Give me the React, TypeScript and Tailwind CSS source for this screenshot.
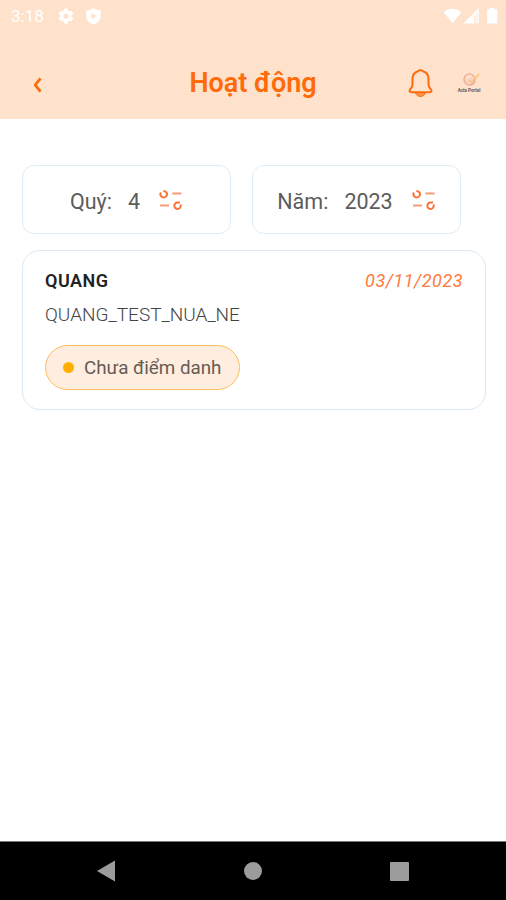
import type { ReactNode } from 'react'

function StatusBar() {
  return (
    <div className="flex h-8 items-center justify-between pl-[11px] pr-[8px] text-white">
      <div className="flex items-center">
        <span className="w-[46px] text-[17px] leading-8">3:18</span>
        <svg className="h-[18px] w-[18px]" viewBox="0 0 24 24" fill="currentColor">
          <path d="M19.4 13a7.5 7.5 0 0 0 0-2l2.1-1.6a.5.5 0 0 0 .1-.6l-2-3.5a.5.5 0 0 0-.6-.2l-2.5 1a7.300 7.300 0 0 0-1.700-1l-.4-2.600a.5.5 0 0 0-.5-.5h-4a.5.5 0 0 0-.5.5L9 5.100a7.700 7.700 0 0 0-1.700 1l-2.500-1a.5.5 0 0 0-.6.2l-2 3.500a.5.5 0 0 0 .1.6L4.500 11a7.500 7.500 0 0 0 0 2l-2.200 1.600a.5.5 0 0 0-.1.6l2 3.500c.1.200.4.300.6.200l2.500-1c.5.400 1.100.700 1.700 1l.4 2.600c0 .3.2.5.5.5h4c.3 0 .5-.2.5-.5l.4-2.600c.6-.3 1.200-.6 1.700-1l2.500 1c.2.1.5 0 .6-.2l2-3.500a.5.5 0 0 0-.1-.6L19.400 13zM12 15.500a3.500 3.500 0 1 1 0-7 3.500 3.500 0 0 1 0 7z" />
        </svg>
        <svg className="ml-[10px] h-[17px] w-[17px]" viewBox="0 0 17 17" fill="currentColor">
          <path fillRule="evenodd" d="M8.500 0 C6.500 1.500 4 2.300 1.300 2.400 V8.500 C1.300 12.500 4.500 15.400 8.500 16.500 C12.500 15.400 15.700 12.500 15.700 8.500 V2.400 C13 2.300 10.500 1.500 8.500 0Z M6.500 4.800 L11.800 8 L6.500 11.200Z" />
        </svg>
      </div>
      <svg className="h-[18px] w-[56px]" viewBox="0 0 56 18" fill="currentColor">
        <path d="M1.500 5 Q10.500-1.500 19.500 5 L10.500 16.300Z" />
        <path fillRule="evenodd" d="M36.700 1 V16.500 H21.500Z M32.300 9 V16.500 H33.500 V9Z M34.600 6 V16.500 H35.500 V6Z" />
        <path d="M48 1 h4.500 v1.400 h2 a.8.8 0 0 1 .8.8 V15.700 a.8.8 0 0 1-.8.8 h-8.500 a.8.8 0 0 1-.8-.8 V3.200 a.8.8 0 0 1 .8-.8 h2Z" />
      </svg>
    </div>
  )
}

function Logo() {
  return (
    <div className="flex w-6 flex-col items-center">
      <svg className="ml-[3px] h-[15px] w-[18px]" viewBox="0 0 18 15" fill="none">
        <circle cx="7.500" cy="7.500" r="5.500" fill="#fad3bd" stroke="#f1b49b" strokeWidth="1.500" />
        <path d="M4.500 7 Q6 3.500 9.500 4.500" stroke="#fdebdd" strokeWidth="1.500" />
        <path d="M7 8.500 L10 10 L17 2" stroke="#f8c27c" strokeWidth="1.600" />
        <path d="M8 13 Q12 12.500 13 9" stroke="#ee9f86" strokeWidth="1" />
      </svg>
      <span className="mt-px whitespace-nowrap text-[4.500px] font-bold leading-[5px] text-[#6b574c]">Acta Portal</span>
    </div>
  )
}

function Header() {
  return (
    <header className="h-[119px] bg-[#ffe2cc]">
      <StatusBar />
      <div className="grid h-[101px] grid-cols-[1fr_auto_1fr] items-center px-[33px] text-[#ff6b0a]">
        <svg className="mt-[4px] h-[18px] w-[10px]" viewBox="0 0 10 18" fill="none" stroke="currentColor" strokeWidth="2.800">
          <path d="M7.500 2.300 L2.200 9 L7.500 15.700" strokeLinejoin="round" />
        </svg>
        <h1 className="mt-px text-[27px] font-semibold leading-8">Hoạt động</h1>
        <div className="-mr-[8px] flex items-center justify-end gap-[24px]">
          <svg className="h-[30px] w-[25px]" viewBox="0 0 25 30" fill="none" stroke="currentColor" strokeWidth="2" strokeLinejoin="round">
            <path d="M10 3.300 Q12.500.500 15 3.300 C19 4.500 20.500 7.500 20.500 11 V16.500 C20.500 19 21.300 19.700 22.800 21.300 C24.200 23 23.300 24.300 21.800 24.300 H3.200 C1.700 24.300.8 23 2.200 21.300 C3.700 19.700 4.500 19 4.500 16.500 V11 C4.500 7.500 6 4.500 10 3.300Z" />
            <path d="M7.500 24.500 C8.500 29.800 16.500 29.800 17.500 24.500Z" fill="currentColor" fillOpacity=".65" strokeWidth="1" />
          </svg>
          <Logo />
        </div>
      </div>
    </header>
  )
}

function FilterIcon() {
  return (
    <svg className="h-[22px] w-6" viewBox="0 0 24 22" fill="none" stroke="#f9743a" strokeWidth="2">
      <path d="M1.900 3.600 A3.200 3.200 0 1 0 7.200 3.200 Q6.300 2 4.300 2" />
      <path d="M13.300 4.500 H22.500 M1 16.500 H10" stroke="#fb9a78" />
      <path d="M21.500 15.500 A3.200 3.200 0 1 1 18.800 13.600 L21 13.600" />
    </svg>
  )
}

function FilterBox({ label, value, children }: { label: string; value: string; children?: ReactNode }) {
  return (
    <button className="flex h-[69px] w-[209px] items-center justify-center rounded-xl border-[1.500px] border-[#dfedf7] text-[21.500px] text-[#5c5c5c]">
      <span className="mt-[5px]">{label}</span>
      <span className="ml-4 mr-[19px] mt-[5px]">{value}</span>
      {children}
    </button>
  )
}

function ActivityCard() {
  return (
    <article className="mt-[16px] h-[160px] rounded-[18px] border border-[#dce8f6] px-[22px] pt-[18px]">
      <div className="flex justify-between text-[18px] leading-6">
        <h2 className="font-semibold tracking-[0.500px] text-[#222]">QUANG</h2>
        <time className="italic tracking-[0.500px] text-[#ff7a40]">03/11/2023</time>
      </div>
      <p className="mt-[10px] text-[19px] font-light leading-6 text-[#444]">QUANG_TEST_NUA_NE</p>
      <div className="mt-[18px] flex h-[45px] w-[195px] items-center rounded-full border-[1.500px] border-[#fdbf5e] bg-[#ffeddf] pl-[17px]">
        <span className="h-[11px] w-[11px] rounded-full bg-[#ffae00]" />
        <span className="ml-[10px] mt-[2px] whitespace-nowrap text-[18.800px] text-[#665c55]">Chưa điểm danh</span>
      </div>
    </article>
  )
}

function NavigationBar() {
  return (
    <nav className="flex h-[59px] items-center justify-between border-t border-[#777] bg-black pl-[96px] pr-[97px] text-[#9c9c9c]">
      <svg className="h-[22px] w-[20px]" viewBox="0 0 20 22" fill="currentColor">
        <path d="M19 .5 V21.500 L1 11Z" />
      </svg>
      <span className="h-[18px] w-[18px] rounded-full bg-current" />
      <span className="h-[19px] w-[19px] rounded-[1px] bg-current" />
    </nav>
  )
}

export default function App() {
  return (
    <div className="flex h-[900px] w-[506px] flex-col overflow-hidden bg-white font-[Roboto,sans-serif]">
      <Header />
      <main className="flex-1 pl-[22px] pr-[20px] pt-[46px]">
        <div className="flex gap-[21px]">
          <FilterBox label="Quý:" value="4">
            <FilterIcon />
          </FilterBox>
          <FilterBox label="Năm:" value="2023">
            <FilterIcon />
          </FilterBox>
        </div>
        <ActivityCard />
      </main>
      <NavigationBar />
    </div>
  )
}
